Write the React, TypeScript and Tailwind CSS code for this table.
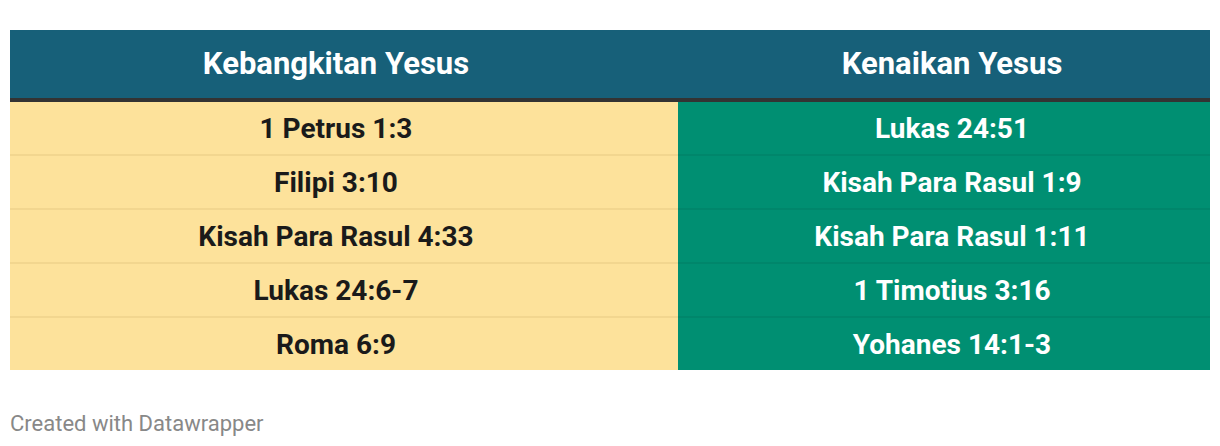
const rows = [
  ["1 Petrus 1:3", "Lukas 24:51"],
  ["Filipi 3:10", "Kisah Para Rasul 1:9"],
  ["Kisah Para Rasul 4:33", "Kisah Para Rasul 1:11"],
  ["Lukas 24:6-7", "1 Timotius 3:16"],
  ["Roma 6:9", "Yohanes 14:1-3"],
];

export default function App() {
  return (
    <div className="w-[1220px] h-[446px] bg-white px-[10px] pt-[30px]" style={{ fontFamily: "Roboto, sans-serif" }}>
      <div className="grid grid-cols-[668px_532px]">
        <div className="h-[68px] bg-[#176079] border-b-4 border-[#333333] box-content flex items-center justify-center pr-[16px] text-[31px] font-bold text-white">
          Kebangkitan Yesus
        </div>
        <div className="h-[68px] bg-[#176079] border-b-4 border-[#333333] box-content flex items-center justify-center pl-[16px] text-[31px] font-bold text-white">
          Kenaikan Yesus
        </div>
        {rows.map(([left, right], i) => (
          <div key={i} className="contents">
            <div
              className={`h-[52px] bg-[#fde29b] flex items-center justify-center pr-[16px] pt-[2px] box-border text-[28px] font-bold text-[#1a1a1a] ${
                i < rows.length - 1 ? "border-b-2 border-[#f2d68f] h-[54px]" : ""
              }`}
            >
              {left}
            </div>
            <div
              className={`h-[52px] bg-[#008f72] flex items-center justify-center pl-[16px] pt-[2px] box-border text-[28px] font-bold text-white ${
                i < rows.length - 1 ? "border-b-2 border-[#00866b] h-[54px]" : ""
              }`}
            >
              {right}
            </div>
          </div>
        ))}
      </div>
      <div className="mt-[40px] text-[22px] leading-[28px] text-[#888888]">Created with Datawrapper</div>
    </div>
  );
}
